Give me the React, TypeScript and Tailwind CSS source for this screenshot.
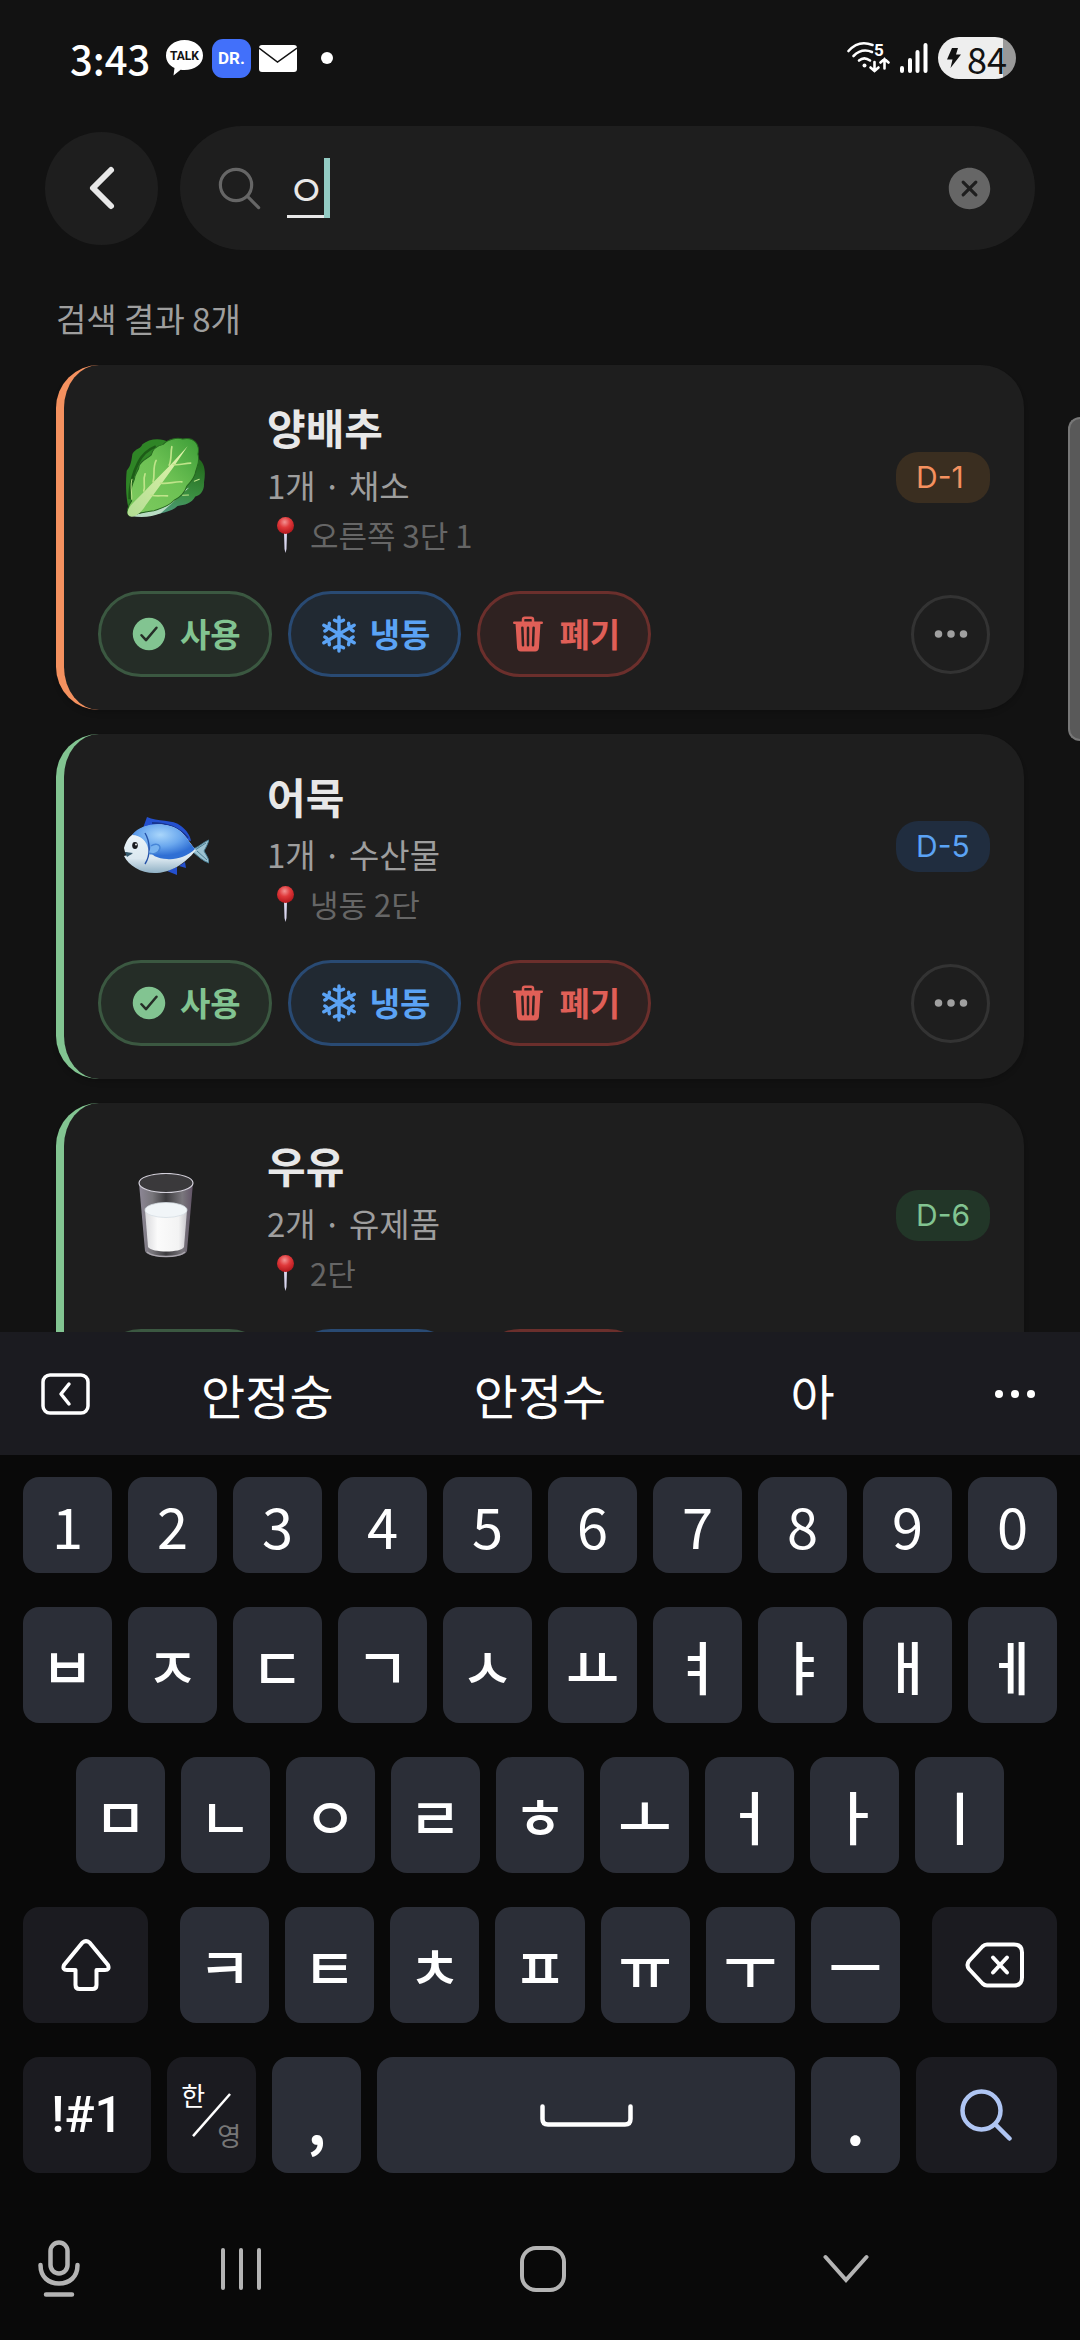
import React from 'react';
import {
  IoCheckmarkCircle,
  IoChevronBack,
  IoCloseCircle,
  IoEllipsisHorizontal,
  IoSearchOutline,
  IoSnow,
  IoTrash,
} from 'react-icons/io5';

/* ---------- food drawings ---------- */

const Lettuce = () => (
  <svg viewBox="78 114 242 242" className="w-[81px] h-[81px]" aria-hidden="true">
    <defs>
      <linearGradient id="leafFront" x1="1" y1="0" x2="0" y2="1">
        <stop offset="0" stopColor="#3c9c37" />
        <stop offset="0.45" stopColor="#6cc153" />
        <stop offset="1" stopColor="#7fcb60" />
      </linearGradient>
      <linearGradient id="leafRight" x1="0.6" y1="0" x2="0.3" y2="1">
        <stop offset="0" stopColor="#236b1e" />
        <stop offset="0.55" stopColor="#3b8f41" />
        <stop offset="1" stopColor="#4f9a83" />
      </linearGradient>
      <linearGradient id="leafRib" x1="1" y1="0" x2="0" y2="1">
        <stop offset="0" stopColor="#e4f5ac" />
        <stop offset="1" stopColor="#b2dd93" />
      </linearGradient>
    </defs>
    <path d="M88 325C80 290 80 245 83 215C96 200 97 185 100 165C110 148 125 150 130 136C150 118 185 115 210 130L150 290Z" fill="#2f8526" />
    <path d="M92 300C90 260 105 215 118 190C130 165 150 150 170 142" fill="none" stroke="#1d5c17" strokeWidth="8" />
    <path d="M296 178C316 190 320 215 314 250C316 275 302 290 288 292C278 312 255 318 235 320C215 340 175 345 130 347L240 230Z" fill="url(#leafRight)" />
    <path d="M95 350C130 356 160 352 185 342L270 265L215 290L150 335Z" fill="#b9dcc4" />
    <path d="M92 350C80 342 86 320 98 305C90 280 98 258 106 240C108 220 122 212 120 200C126 185 142 180 156 168C160 150 176 140 192 136C206 120 235 114 250 120C282 112 303 135 296 165C304 190 290 208 288 222C284 240 272 250 262 262C255 285 238 296 225 303C208 322 182 328 165 334C140 338 130 336 92 350Z" fill="url(#leafFront)" stroke="#25651f" strokeWidth="3" />
    <path d="M86 336C90 318 120 295 150 262L215 196L265 142L222 205L140 318C128 338 112 352 98 352C88 350 84 345 86 336Z" fill="url(#leafRib)" />
    <g fill="none" stroke="#bfe48a" strokeWidth="5" strokeLinecap="round">
      <path d="M210 198C218 180 214 160 218 143" />
      <path d="M222 196C240 200 255 192 274 192" />
      <path d="M162 248C168 225 160 205 171 184" />
      <path d="M184 252C208 256 225 246 248 248" />
      <path d="M134 275C140 258 130 245 138 224" />
      <path d="M156 288C176 292 188 288 205 290" />
      <path d="M98 300C100 280 92 262 99 240" strokeWidth="3" />
      <path d="M285 246L300 240M250 288L268 287" strokeWidth="3" />
    </g>
  </svg>
);

const Fish = () => (
  <svg viewBox="0 0 86 58" className="w-[86px] h-[58px]" aria-hidden="true">
    <defs>
      <radialGradient id="fishBack" cx="0.45" cy="0.3" r="0.6">
        <stop offset="0" stopColor="#a9d6fb" />
        <stop offset="0.55" stopColor="#6ba8ee" />
        <stop offset="1" stopColor="#2f6fd4" />
      </radialGradient>
      <linearGradient id="fishBelly" x1="0" y1="0" x2="0" y2="1">
        <stop offset="0" stopColor="#f4fafd" />
        <stop offset="0.7" stopColor="#dbe8f0" />
        <stop offset="1" stopColor="#8fb0c4" />
      </linearGradient>
    </defs>
    <path d="M20 11L24 0C34 5 50 2 58 9C64 14 67 18 68 24Z" fill="#2450cf" />
    <path d="M29 6C45 6 57 12 65 21" fill="none" stroke="#173590" strokeWidth="2" />
    <path d="M44 54L54 58L54 50ZM56 49L63 51L62 45Z" fill="#2450cf" />
    <path d="M68 32C74 32 80 25 86 23C84 29 82 32 81 34C83 38 86 41 86 46C80 44 76 40 70 35Z" fill="#9cc3d2" stroke="#4b7f94" strokeWidth="1" />
    <path d="M72 33L83 26M74 34L84 43" stroke="#4b7f94" strokeWidth="1" />
    <path d="M1 31C3 24 6 19 12 16C22 5 46 5 57 14C64 20 68 28 73 33C66 42 52 55 34 56C19 57 6 49 1 39L9 37L2 35Z" fill="url(#fishBelly)" />
    <path d="M9 18C20 4 46 5 57 14C64 20 68 28 72 32C64 40 52 43 44 42C35 42 27 38 25 31C24 25 18 18 9 18Z" fill="url(#fishBack)" />
    <path d="M2 35L10 36L4 40" fill="#35596d" />
    <ellipse cx="12" cy="28.500" rx="2.800" ry="3.400" fill="#191b1f" />
    <circle cx="13" cy="27.500" r="0.900" fill="#fff" />
    <path d="M22 16C27 24 28 38 22 47" fill="none" stroke="#2552a8" strokeWidth="1.400" />
    <path d="M26 36C30 38 36 36 37 31C37 27 32 26 28 29" fill="#78b3f0" stroke="#4786d8" strokeWidth="1.400" />
  </svg>
);

const Milk = () => (
  <svg viewBox="0 0 56 85" className="w-[56px] h-[85px]" aria-hidden="true">
    <defs>
      <linearGradient id="glass" x1="0" y1="0" x2="1" y2="0">
        <stop offset="0" stopColor="#8d8796" />
        <stop offset="0.25" stopColor="#77757a" />
        <stop offset="0.5" stopColor="#3c3b3e" />
        <stop offset="0.8" stopColor="#7a777d" />
        <stop offset="1" stopColor="#625467" />
      </linearGradient>
      <linearGradient id="milk" x1="0" y1="0" x2="1" y2="0">
        <stop offset="0" stopColor="#d9d9dc" />
        <stop offset="0.3" stopColor="#fbfbfb" />
        <stop offset="0.8" stopColor="#f3f3f3" />
        <stop offset="1" stopColor="#c9c6cc" />
      </linearGradient>
    </defs>
    <path d="M1 10L7 78C10 86 46 86 49 78L55 10Z" fill="url(#glass)" />
    <ellipse cx="28" cy="10" rx="27" ry="9.500" fill="#3a393b" stroke="#d3d0da" strokeWidth="1.200" />
    <path d="M7 37L10 74C14 80 43 80 46 74L49 37Z" fill="url(#milk)" />
    <ellipse cx="28" cy="37" rx="21" ry="7.500" fill="#f1f5f8" stroke="#d5dde3" strokeWidth="0.800" />
    <path d="M9 79C16 85 40 85 47 79" fill="none" stroke="#aaa6ae" strokeWidth="1.500" />
  </svg>
);

const Pin = () => (
  <svg viewBox="0 0 37 36" className="w-[37px] h-9" aria-hidden="true">
    <defs>
      <radialGradient id="pinHead" cx="0.45" cy="0.3" r="0.65">
        <stop offset="0" stopColor="#f29292" />
        <stop offset="0.5" stopColor="#e0393b" />
        <stop offset="1" stopColor="#b81a1f" />
      </radialGradient>
    </defs>
    <path d="M17 15H20L19.500 32L18.500 36L17.500 32Z" fill="#d9d6ee" />
    <circle cx="18.500" cy="8.500" r="8.500" fill="url(#pinHead)" />
  </svg>
);

/* ---------- data ---------- */

interface FoodItem {
  name: string;
  detail: string;
  place: string;
  dday: string;
  picture: React.ReactNode;
  edge: string;
  badge: string;
}

const items: FoodItem[] = [
  {
    name: '양배추',
    detail: '1개 · 채소',
    place: '오른쪽 3단 1',
    dday: 'D-1',
    picture: <Lettuce />,
    edge: 'border-[#f4915f]',
    badge: 'bg-[#3a2e20] text-[#f4915f]',
  },
  {
    name: '어묵',
    detail: '1개 · 수산물',
    place: '냉동 2단',
    dday: 'D-5',
    picture: <Fish />,
    edge: 'border-[#82c491]',
    badge: 'bg-[#202d3f] text-[#5ba3f5]',
  },
  {
    name: '우유',
    detail: '2개 · 유제품',
    place: '2단',
    dday: 'D-6',
    picture: <Milk />,
    edge: 'border-[#82c491]',
    badge: 'bg-[#223628] text-[#82c491]',
  },
];

const suggestions = ['안정숭', '안정수', '아'];
const numberRow = ['1', '2', '3', '4', '5', '6', '7', '8', '9', '0'];
const topRow = ['ㅂ', 'ㅈ', 'ㄷ', 'ㄱ', 'ㅅ', 'ㅛ', 'ㅕ', 'ㅑ', 'ㅐ', 'ㅔ'];
const homeRow = ['ㅁ', 'ㄴ', 'ㅇ', 'ㄹ', 'ㅎ', 'ㅗ', 'ㅓ', 'ㅏ', 'ㅣ'];
const bottomRow = ['ㅋ', 'ㅌ', 'ㅊ', 'ㅍ', 'ㅠ', 'ㅜ', 'ㅡ'];

/* ---------- top of the screen ---------- */

const StatusBar = () => (
  <div className="flex h-[116px] items-center justify-between pl-[70px] pr-16 text-white">
    <div className="flex items-center">
      <span className="w-24 text-[40px] leading-[48px] font-medium">3:43</span>
      <svg viewBox="0 0 37 36" className="w-[37px] h-9" aria-hidden="true">
        <path d="M18.500 0C28.700 0 37 6.700 37 15.500S28.700 30 18.500 30C17.200 30 15.800 29.900 14.600 29.700L7.500 35.500L8.500 28C3.300 25.500 0 21 0 15.500C0 6.700 8.300 0 18.500 0Z" fill="#fff" />
        <text x="18.500" y="20" textAnchor="middle" fontSize="12" fontWeight="700" fontFamily="Roboto, sans-serif" fill="#121212">TALK</text>
      </svg>
      <span className="ml-[9px] flex h-[39px] w-[39px] items-center justify-center rounded-[11px] bg-[#4270fa] font-[Roboto,sans-serif] text-[17px] leading-none font-bold">DR.</span>
      <svg viewBox="0 0 38 27" className="ml-2 w-[38px] h-[27px]" aria-hidden="true">
        <rect width="38" height="27" rx="3" fill="#fff" />
        <path d="M0 3L18.500 17L38 3" fill="none" stroke="#121212" strokeWidth="1.500" />
      </svg>
      <span className="ml-6 h-3 w-3 rounded-full bg-white"></span>
    </div>
    <div className="flex items-center">
      <svg viewBox="0 0 43 36" className="w-[43px] h-9" aria-hidden="true">
        <g fill="none" stroke="#fff" strokeWidth="2.600" strokeLinecap="round">
          <path d="M1.500 11C9 2.500 18 2 25.500 5" />
          <path d="M6.500 16C12 10.500 19 9.500 25 12" />
          <path d="M12 20.500C15.500 17.500 19 17.500 23 20.500" />
          <path d="M27.500 22V31M23.500 27.500L27.500 31L31.500 27.500" />
          <path d="M37.500 28.500V19M33.500 22.500L37.500 19L41.500 22.500" />
        </g>
        <circle cx="17.500" cy="25.500" r="2" fill="#fff" />
        <text x="27" y="16" fontSize="17" fontWeight="700" fontFamily="Roboto, sans-serif" fill="#fff">5</text>
      </svg>
      <svg viewBox="0 0 28 30" className="ml-[10px] w-7 h-[30px]" aria-hidden="true">
        <path d="M2 25V28M10 17V28M17.500 9V28M25.500 2V28" stroke="#fff" strokeWidth="4" strokeLinecap="round" />
      </svg>
      <span className="ml-[10px] flex h-[42px] w-[78px] items-center justify-center gap-[6px] rounded-full bg-[linear-gradient(90deg,#eeeeee_83%,#999999_83%)] text-[36px] leading-[40px] text-[#121212]">
        <svg viewBox="0 0 14 20" className="w-[14px] h-5" aria-hidden="true">
          <path d="M5 0H11L9 6.500H14L3.500 20L5.500 11.500H0Z" fill="#121212" />
        </svg>
        84
      </span>
    </div>
  </div>
);

const SearchHeader = () => (
  <header className="mt-[10px] flex items-center gap-[22px] px-[45px]">
    <button className="flex h-[113px] w-[113px] shrink-0 items-center justify-center rounded-full bg-[#1e1e1e] text-[#e8e8e8]" aria-label="뒤로">
      <IoChevronBack size={64} />
    </button>
    <div className="flex h-[124px] flex-1 items-center rounded-full bg-[#1e1e1e] pl-[34px] pr-10">
      <IoSearchOutline size={51} className="shrink-0 text-[#666666]" />
      <div className="relative ml-[22px] flex-1">
        <input
          type="text"
          defaultValue="ㅇ"
          aria-label="식품 검색"
          className="w-full bg-transparent text-[42px] leading-[60px] text-[#e8e8e8] underline decoration-[3px] underline-offset-[9px] outline-none"
        />
        <span className="absolute left-[37px] top-0 h-[60px] w-[6px] bg-[#93cbc3]"></span>
      </div>
      <button className="text-[#666666]" aria-label="지우기">
        <IoCloseCircle size={51} />
      </button>
    </div>
  </header>
);

const FoodCard = ({ item }: { item: FoodItem }) => (
  <article className={`rounded-[43px] border-l-8 bg-[#1e1e1e] px-[34px] pt-[30px] pb-[33px] shadow-md ${item.edge}`}>
    <div className="flex items-center">
      <div className="flex w-[135px] shrink-0 justify-center">{item.picture}</div>
      <div className="ml-[34px] flex-1">
        <h2 className="text-[42px] leading-[64px] font-bold text-[#e8e8e8]">{item.name}</h2>
        <p className="text-[33px] leading-[52px] text-[#9e9e9e]">{item.detail}</p>
        <p className="flex items-center gap-[6px] text-[31px] leading-[48px] text-[#666666]">
          <Pin />
          {item.place}
        </p>
      </div>
      <span className={`w-[94px] rounded-[22px] pl-5 font-[Inter,sans-serif] text-[30px] leading-[51px] ${item.badge}`}>{item.dday}</span>
    </div>
    <div className="mt-8 flex items-center gap-4">
      <button className="flex h-[86px] items-center gap-[11px] rounded-full border-[3px] border-[#3b5841] bg-[#252d27] px-7 text-[33px] font-bold text-[#82c491]">
        <IoCheckmarkCircle size={40} />
        사용
      </button>
      <button className="flex h-[86px] items-center gap-[11px] rounded-full border-[3px] border-[#294a73] bg-[#212932] px-7 text-[33px] font-bold text-[#5ba3f5]">
        <IoSnow size={40} />
        냉동
      </button>
      <button className="flex h-[86px] items-center gap-[11px] rounded-full border-[3px] border-[#6b2f2c] bg-[#2f2221] px-7 text-[33px] font-bold text-[#e05f57]">
        <IoTrash size={40} />
        폐기
      </button>
      <button className="ml-auto flex h-[79px] w-[79px] items-center justify-center rounded-full border-[3px] border-[#333333] text-[#a0a0a0]" aria-label="더보기">
        <IoEllipsisHorizontal size={40} />
      </button>
    </div>
  </article>
);

/* ---------- keyboard ---------- */

const Key = ({ children, className = '', label }: { children: React.ReactNode; className?: string; label?: string }) => (
  <button aria-label={label} className={`flex flex-1 items-center justify-center rounded-2xl bg-[#2b2e37] text-white ${className}`}>
    {children}
  </button>
);

const Keyboard = () => (
  <div className="shrink-0 bg-[#090909]">
    <div className="flex h-[123px] items-center bg-[#1b1b20] text-white">
      <button className="flex w-[131px] justify-center" aria-label="도구 모음">
        <svg viewBox="0 0 49 42" className="w-[49px] h-[42px]" fill="none" stroke="#fff" strokeWidth="3.500" strokeLinecap="round" strokeLinejoin="round">
          <rect x="2" y="2" width="45" height="38" rx="7" />
          <path d="M28 11L20 21L28 31" />
        </svg>
      </button>
      {suggestions.map((word) => (
        <button key={word} className="flex-1 text-[48px] leading-[60px]">{word}</button>
      ))}
      <button className="flex w-[131px] justify-center" aria-label="더보기">
        <svg viewBox="0 0 40 8" className="w-10 h-2" fill="#fff">
          <circle cx="4" cy="4" r="4" />
          <circle cx="20" cy="4" r="4" />
          <circle cx="36" cy="4" r="4" />
        </svg>
      </button>
    </div>

    <div className="flex flex-col gap-[34px] px-[23px] pt-[22px]">
      <div className="flex h-24 gap-4">
        {numberRow.map((k) => (
          <Key key={k} className="text-[56px] leading-none">{k}</Key>
        ))}
      </div>
      <div className="flex h-[116px] gap-4">
        {topRow.map((k) => (
          <Key key={k} className="text-[58px] leading-none font-medium">{k}</Key>
        ))}
      </div>
      <div className="flex h-[116px] gap-4 px-[53px]">
        {homeRow.map((k) => (
          <Key key={k} className="text-[58px] leading-none font-medium">{k}</Key>
        ))}
      </div>
      <div className="flex h-[116px] gap-8">
        <button className="flex w-[125px] items-center justify-center rounded-2xl bg-[#1b1b20]" aria-label="Shift">
          <svg viewBox="0 0 50 52" className="w-[50px] h-[52px]" fill="none" stroke="#fff" strokeWidth="4" strokeLinejoin="round">
            <path d="M21.500 3.500Q25 0.800 28.500 3.500L47 26Q49 31 44 31H35.500V46Q35.500 50 31.500 50H18.500Q14.500 50 14.500 46V31H6Q1 31 3 26Z" />
          </svg>
        </button>
        <div className="flex flex-1 gap-4">
          {bottomRow.map((k) => (
            <Key key={k} className="text-[58px] leading-none font-medium">{k}</Key>
          ))}
        </div>
        <button className="flex w-[125px] items-center justify-center rounded-2xl bg-[#1b1b20]" aria-label="삭제">
          <svg viewBox="0 0 60 46" className="w-[60px] h-[46px]" fill="none" stroke="#fff" strokeWidth="4" strokeLinecap="round" strokeLinejoin="round">
            <path d="M22 2.500H49Q57 2.500 57 10.500V35.500Q57 43.500 49 43.500H22Q19.500 43.500 17.500 41.500L4 27Q1 23 4 19L17.500 4.500Q19.500 2.500 22 2.500Z" />
            <path d="M28 15.500L42 30.500M42 15.500L28 30.500" />
          </svg>
        </button>
      </div>
      <div className="grid h-[116px] grid-cols-[128fr_89fr_89fr_417fr_89fr_141fr] gap-4">
        <button className="rounded-2xl bg-[#1b1b20] font-[Roboto,sans-serif] text-[50px] leading-none font-medium text-white">!#1</button>
        <button className="relative rounded-2xl bg-[#1b1b20] text-[26px] leading-none text-white">
          <span className="absolute left-[14px] top-[25px]">한</span>
          <svg viewBox="0 0 89 116" className="h-full w-full" aria-hidden="true">
            <path d="M26 79L63 37" stroke="#fff" strokeWidth="2.500" />
          </svg>
          <span className="absolute bottom-[25px] right-[15px] text-[#777777]">영</span>
        </button>
        <Key className="pt-3 text-[56px] leading-none font-bold">,</Key>
        <Key label="스페이스">
          <svg viewBox="0 0 93 23" className="w-[93px] h-[23px]" fill="none" stroke="#fff" strokeWidth="4.500" strokeLinecap="round">
            <path d="M2.500 2.500V15Q2.500 20.500 8 20.500H85Q90.500 20.500 90.500 15V2.500" />
          </svg>
        </Key>
        <Key className="pt-3 text-[56px] leading-none font-bold">.</Key>
        <button className="flex items-center justify-center rounded-2xl bg-[#1b1b20]" aria-label="검색">
          <svg viewBox="0 0 52 52" className="w-[52px] h-[52px]" fill="none" stroke="#afc5f3" strokeWidth="4.500" strokeLinecap="round">
            <circle cx="21.500" cy="21.500" r="19" />
            <path d="M35.500 35.500L49.500 49.500" />
          </svg>
        </button>
      </div>
    </div>

    <div className="flex h-[167px] items-center pl-[38px] pr-[83px] pt-6">
      <button className="w-[52px]" aria-label="음성 입력">
        <svg viewBox="0 0 42 57" className="w-[42px] h-[57px]" fill="none" stroke="#b4b4b4" strokeWidth="4.500" strokeLinecap="round">
          <rect x="12.500" y="2.500" width="17" height="31" rx="8.500" />
          <path d="M2.500 25C2.500 37 10.500 43.500 21 43.500S39.500 37 39.500 25M8 54.500H34" />
        </svg>
      </button>
      <button className="flex flex-1 justify-center" aria-label="최근 앱">
        <svg viewBox="0 0 42 44" className="w-[42px] h-11" stroke="#b4b4b4" strokeWidth="4" strokeLinecap="round">
          <path d="M3 3V41M21 3V41M39 3V41" />
        </svg>
      </button>
      <button className="flex flex-1 justify-center" aria-label="홈">
        <svg viewBox="0 0 46 46" className="w-[46px] h-[46px]" fill="none" stroke="#b4b4b4" strokeWidth="4">
          <rect x="2" y="2" width="42" height="42" rx="14" />
        </svg>
      </button>
      <button className="flex flex-1 justify-center" aria-label="키보드 닫기">
        <svg viewBox="0 0 46 30" className="w-[46px] h-[30px]" fill="none" stroke="#b4b4b4" strokeWidth="4" strokeLinecap="round">
          <path d="M2.500 3L23 26L43.500 3" />
        </svg>
      </button>
    </div>
  </div>
);

const App: React.FC = () => {
  return (
    <div className="flex h-screen flex-col overflow-hidden bg-[#121212] font-['Noto_Sans_CJK_KR',sans-serif]">
      <StatusBar />
      <SearchHeader />

      <main className="relative min-h-0 flex-1 overflow-hidden px-14 pt-11">
        <p className="mb-[23px] text-[33px] leading-[48px] text-[#9e9e9e]">검색 결과 8개</p>
        <div className="flex flex-col gap-6">
          {items.map((item) => (
            <FoodCard key={item.name} item={item} />
          ))}
        </div>
        {/* scroll thumb */}
        <div className="absolute right-0 top-[167px] h-[324px] w-3 rounded-l-xl border-2 border-r-0 border-[#777777] bg-[#595959]"></div>
      </main>

      <Keyboard />
    </div>
  );
};

export default App;
